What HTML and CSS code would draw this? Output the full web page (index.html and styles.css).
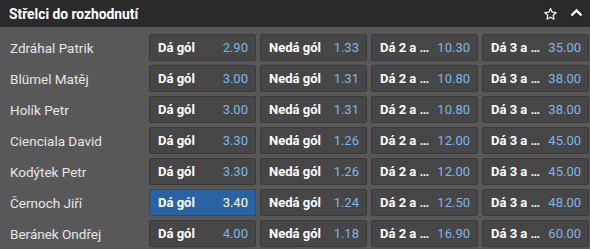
FILE: index.html
```html
<!DOCTYPE html>
<html>
<head>
<meta charset="utf-8">
<link rel="stylesheet" href="styles.css">
</head>
<body>
<div class="market">
  <div class="header">
    <span class="title">Střelci do rozhodnutí</span>
    <div class="tools">
      <svg class="star" width="15" height="14" viewBox="0 0 24 24"><path d="M12 2.5l2.9 6.3 6.9.7-5.2 4.6 1.5 6.8L12 17.4l-6.1 3.5 1.5-6.8L2.2 9.5l6.9-.7z" fill="none" stroke="#fff" stroke-width="2" stroke-linejoin="round"/></svg>
      <svg class="chev" width="13" height="9" viewBox="0 0 13 9"><path d="M1.5 7.5L6.5 2.5l5 5" fill="none" stroke="#fff" stroke-width="2.4"/></svg>
    </div>
  </div>
  <div class="rows">
    <div class="row"><span class="name">Zdráhal Patrik</span>
      <div class="odd"><b>Dá gól</b><i>2.90</i></div><div class="odd"><b>Nedá gól</b><i>1.33</i></div><div class="odd"><b>Dá 2 a …</b><i>10.30</i></div><div class="odd"><b>Dá 3 a …</b><i>35.00</i></div></div>
    <div class="row"><span class="name">Blümel Matěj</span>
      <div class="odd"><b>Dá gól</b><i>3.00</i></div><div class="odd"><b>Nedá gól</b><i>1.31</i></div><div class="odd"><b>Dá 2 a …</b><i>10.80</i></div><div class="odd"><b>Dá 3 a …</b><i>38.00</i></div></div>
    <div class="row"><span class="name">Holík Petr</span>
      <div class="odd"><b>Dá gól</b><i>3.00</i></div><div class="odd"><b>Nedá gól</b><i>1.31</i></div><div class="odd"><b>Dá 2 a …</b><i>10.80</i></div><div class="odd"><b>Dá 3 a …</b><i>38.00</i></div></div>
    <div class="row"><span class="name">Cienciala David</span>
      <div class="odd"><b>Dá gól</b><i>3.30</i></div><div class="odd"><b>Nedá gól</b><i>1.26</i></div><div class="odd"><b>Dá 2 a …</b><i>12.00</i></div><div class="odd"><b>Dá 3 a …</b><i>45.00</i></div></div>
    <div class="row"><span class="name">Kodýtek Petr</span>
      <div class="odd"><b>Dá gól</b><i>3.30</i></div><div class="odd"><b>Nedá gól</b><i>1.26</i></div><div class="odd"><b>Dá 2 a …</b><i>12.00</i></div><div class="odd"><b>Dá 3 a …</b><i>45.00</i></div></div>
    <div class="row"><span class="name">Černoch Jiří</span>
      <div class="odd selected"><b>Dá gól</b><i>3.40</i></div><div class="odd"><b>Nedá gól</b><i>1.24</i></div><div class="odd"><b>Dá 2 a …</b><i>12.50</i></div><div class="odd"><b>Dá 3 a …</b><i>48.00</i></div></div>
    <div class="row"><span class="name">Beránek Ondřej</span>
      <div class="odd"><b>Dá gól</b><i>4.00</i></div><div class="odd"><b>Nedá gól</b><i>1.18</i></div><div class="odd"><b>Dá 2 a …</b><i>16.90</i></div><div class="odd"><b>Dá 3 a …</b><i>60.00</i></div></div>
  </div>
</div>
</body>
</html>
```
FILE: styles.css
```css
* { box-sizing: border-box; }
html, body { margin: 0; padding: 0; background: #585858; }
body { font-family: Roboto, "Liberation Sans", sans-serif; font-size: 13px; width: 590px; height: 249px; overflow: hidden; }
.header {
  height: 27px; background: #2a2a2a; display: flex; align-items: center;
  justify-content: space-between; padding: 0 7px 0 9px;
}
.title { color: #fff; font-weight: bold; font-size: 13.8px; }
.tools { display: flex; align-items: center; gap: 12px; }
.chev { margin-top: -2px; }
.rows { padding: 7px 0 0 10px; display: flex; flex-direction: column; gap: 4px; }
.row { display: flex; align-items: center; height: 27px; gap: 4px; }
.name { flex: none; width: 135px; color: #e6e6e6; font-size: 13.5px; }
.odd {
  flex: none; width: 107px; height: 27px; background: #464646; border: 1px solid #393939;
  border-radius: 2px; display: flex; align-items: center; justify-content: space-between;
  padding: 0 7px 0 8px;
}
.odd b { color: #fff; font-weight: bold; font-size: 13px; white-space: nowrap; }
.odd i { font-style: normal; color: #7cb6ea; font-size: 13px; white-space: nowrap; }
.odd.selected { background: #2a63a1; border-color: #234f80; }
.odd.selected i { color: #fff; }
```
